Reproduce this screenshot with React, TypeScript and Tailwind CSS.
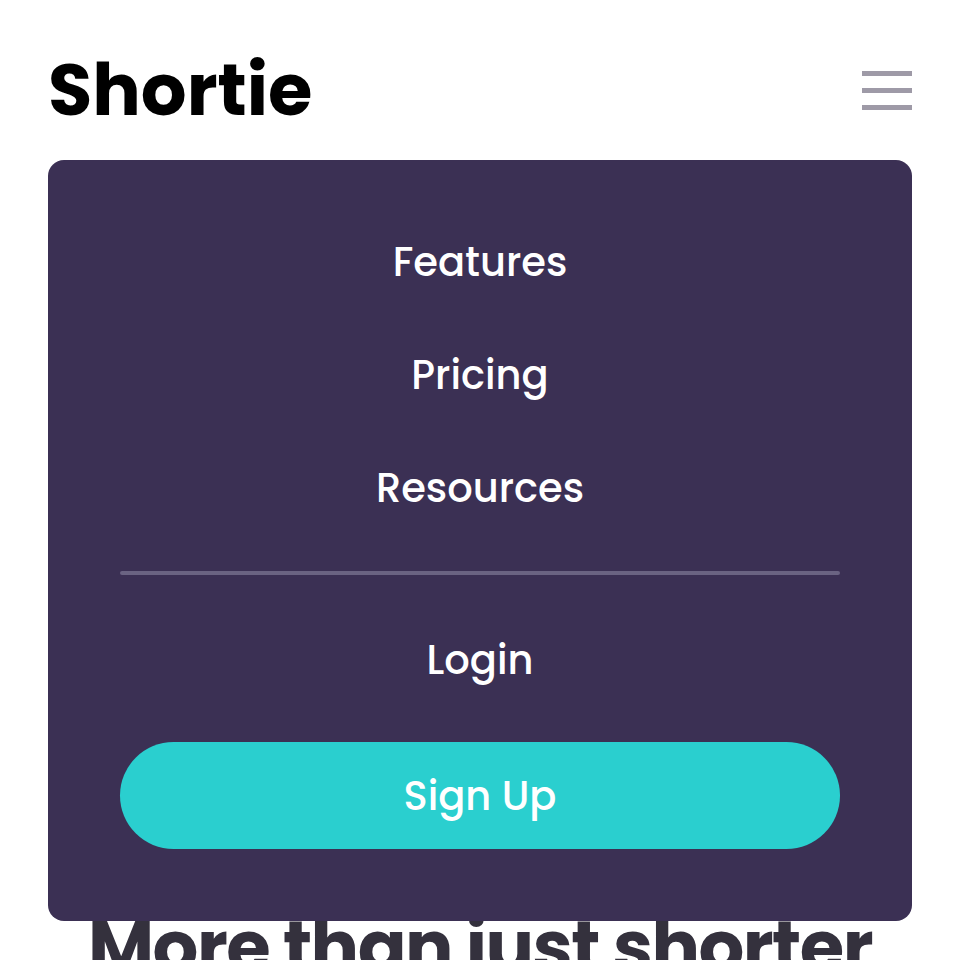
import { useState } from "react";

const links = ["Features", "Pricing", "Resources"];

export default function App() {
  const [open, setOpen] = useState(true);

  return (
    <div className="relative min-h-screen bg-white font-['Poppins','Inter',sans-serif] overflow-hidden">
      {/* Header */}
      <header className="flex items-center justify-between px-12 pt-[40px]">
        <a href="#" className="text-[72px] leading-[100px] font-bold text-black">
          Shortie
        </a>
        <button
          onClick={() => setOpen(!open)}
          aria-label="Toggle menu"
          className="flex flex-col gap-3 w-[50px]"
        >
          <span className="block h-[5px] w-full bg-[#9e9aa7]"></span>
          <span className="block h-[5px] w-full bg-[#9e9aa7]"></span>
          <span className="block h-[5px] w-full bg-[#9e9aa7]"></span>
        </button>
      </header>

      {/* Hero */}
      <main className="px-12">
        <div className="h-[764px]"></div>
        <h1 className="text-center text-[72px] leading-[86px] font-bold text-[#34313d] tracking-[-1.5px]">
          More than just shorter links
        </h1>
      </main>

      {/* Mobile menu */}
      {open && (
        <nav className="absolute top-[160px] left-12 right-12 bg-[#3b3054] rounded-2xl px-[72px] pt-[78px] pb-[72px] flex flex-col items-center">
          <ul className="flex flex-col items-center gap-[65px]">
            {links.map((link) => (
              <li key={link}>
                <a href="#" className="block text-[40px] leading-[48px] font-medium text-white">
                  {link}
                </a>
              </li>
            ))}
          </ul>
          <div className="w-full h-[4px] rounded-full bg-[#6a6382] mt-[59px]"></div>
          <a href="#" className="mt-[61px] text-[40px] leading-[48px] font-medium text-white">
            Login
          </a>
          <a
            href="#"
            className="mt-[58px] w-full h-[107px] rounded-full bg-[#2acfcf] flex items-center justify-center text-[40px] font-medium text-white"
          >
            Sign Up
          </a>
        </nav>
      )}
    </div>
  );
}
